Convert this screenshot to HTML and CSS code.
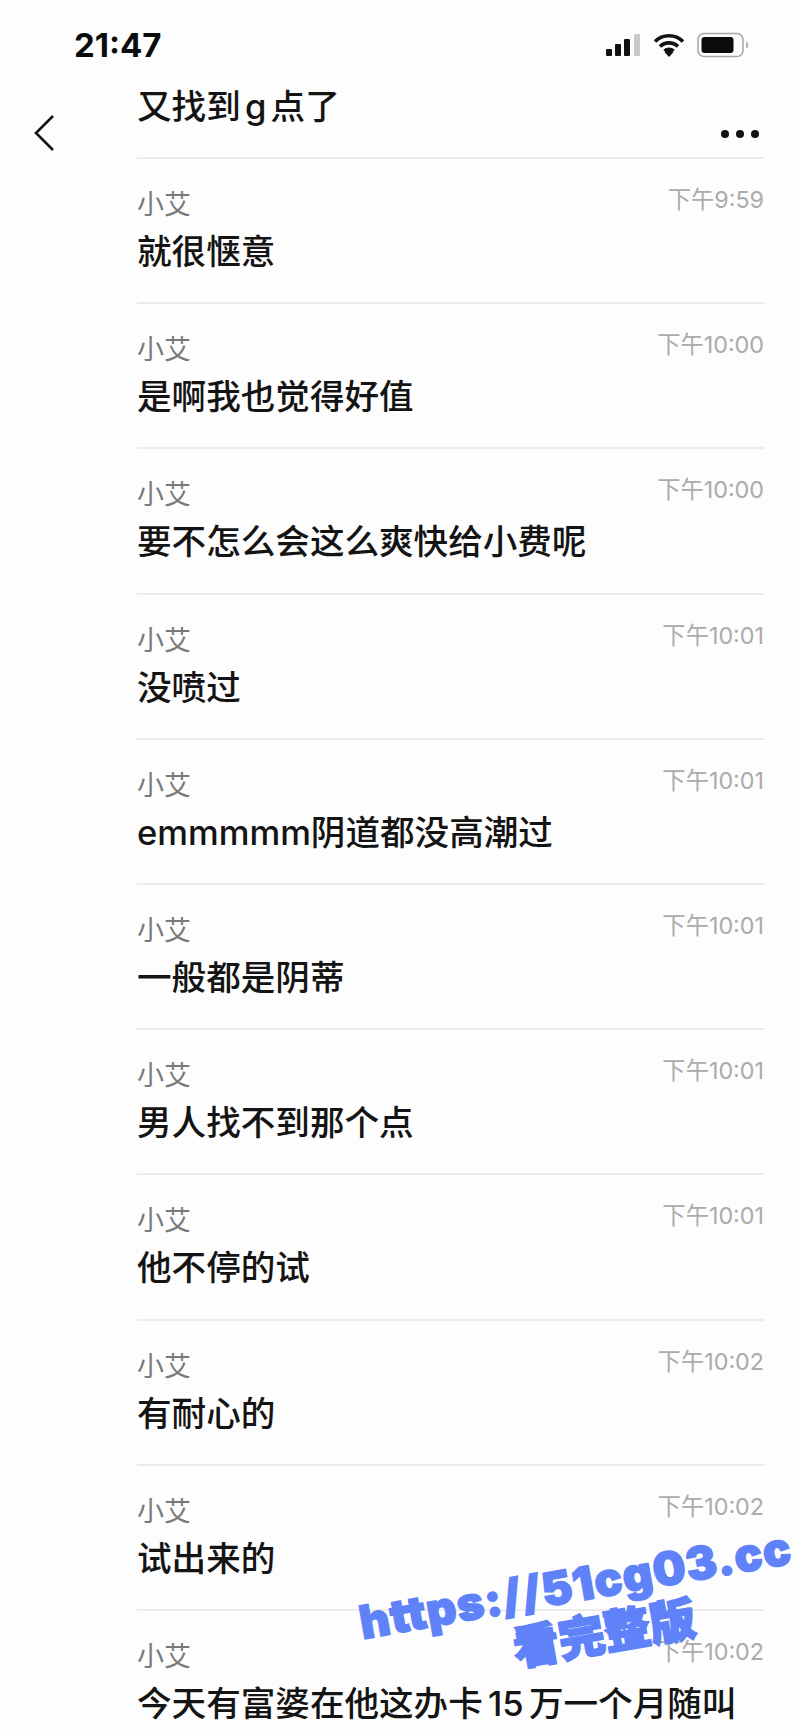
FILE: index.html
```html
<!DOCTYPE html>
<html lang="zh">
<head>
    <meta charset="UTF-8">
    <meta name="viewport" content="width=device-width, initial-scale=1.0">
    <title>又找到g点了</title>
    <link rel="stylesheet" href="styles.css">
</head>
<body>
    <div class="status-bar">
        <span class="clock">21:47</span>
        <div class="status-icons">
            <svg width="36" height="24" viewBox="0 0 36 24">
                <rect x="1" y="16" width="6" height="7" rx="1" fill="#111"/>
                <rect x="10" y="11" width="6" height="12" rx="1" fill="#111"/>
                <rect x="19" y="6" width="6" height="17" rx="1" fill="#111"/>
                <rect x="29" y="1" width="6" height="22" rx="1" fill="#c9c9c9"/>
            </svg>
            <svg width="32" height="24" viewBox="0 0 32 24">
                <path d="M2 8.5a20 20 0 0 1 28 0M7 13.5a13 13 0 0 1 18 0M11.5 18a6.500 6.500 0 0 1 9 0" fill="none" stroke="#111" stroke-width="3.600"/>
                <path d="M16 24l-4.500-5a6.500 6.500 0 0 1 9 0z" fill="#111"/>
            </svg>
            <svg width="52" height="26" viewBox="0 0 52 26">
                <rect x="1" y="1.500" width="45" height="23" rx="6" fill="none" stroke="#a8a8a8" stroke-width="1.600"/>
                <rect x="4.500" y="5" width="32" height="16" rx="3" fill="#0c0c0c"/>
                <path d="M49 9.500c1.500.5 2.500 2 2.500 3.500s-1 3-2.500 3.500z" fill="#b5b5b5"/>
            </svg>
        </div>
    </div>

    <div class="nav-bar">
        <svg class="back-icon" width="24" height="38" viewBox="0 0 24 38">
            <path d="M21 2L4 19l17 17" fill="none" stroke="#111" stroke-width="2.600"/>
        </svg>
        <h1 class="nav-title">又找到 g 点了</h1>
        <div class="more-dots"><i></i><i></i><i></i></div>
    </div>

    <div class="msg-list">
        <div class="msg-row">
            <div class="msg-head"><span class="msg-name">小艾</span><span class="msg-time">下午9:59</span></div>
            <div class="msg-text">就很惬意</div>
        </div>
        <div class="msg-row">
            <div class="msg-head"><span class="msg-name">小艾</span><span class="msg-time">下午10:00</span></div>
            <div class="msg-text">是啊我也觉得好值</div>
        </div>
        <div class="msg-row">
            <div class="msg-head"><span class="msg-name">小艾</span><span class="msg-time">下午10:00</span></div>
            <div class="msg-text">要不怎么会这么爽快给小费呢</div>
        </div>
        <div class="msg-row">
            <div class="msg-head"><span class="msg-name">小艾</span><span class="msg-time">下午10:01</span></div>
            <div class="msg-text">没喷过</div>
        </div>
        <div class="msg-row">
            <div class="msg-head"><span class="msg-name">小艾</span><span class="msg-time">下午10:01</span></div>
            <div class="msg-text">emmmmm阴道都没高潮过</div>
        </div>
        <div class="msg-row">
            <div class="msg-head"><span class="msg-name">小艾</span><span class="msg-time">下午10:01</span></div>
            <div class="msg-text">一般都是阴蒂</div>
        </div>
        <div class="msg-row">
            <div class="msg-head"><span class="msg-name">小艾</span><span class="msg-time">下午10:01</span></div>
            <div class="msg-text">男人找不到那个点</div>
        </div>
        <div class="msg-row">
            <div class="msg-head"><span class="msg-name">小艾</span><span class="msg-time">下午10:01</span></div>
            <div class="msg-text">他不停的试</div>
        </div>
        <div class="msg-row">
            <div class="msg-head"><span class="msg-name">小艾</span><span class="msg-time">下午10:02</span></div>
            <div class="msg-text">有耐心的</div>
        </div>
        <div class="msg-row">
            <div class="msg-head"><span class="msg-name">小艾</span><span class="msg-time">下午10:02</span></div>
            <div class="msg-text">试出来的</div>
        </div>
        <div class="msg-row">
            <div class="msg-head"><span class="msg-name">小艾</span><span class="msg-time">下午10:02</span></div>
            <div class="msg-text">今天有富婆在他这办卡 15 万一个月随叫</div>
        </div>
    </div>

    <div class="watermark">
        <div class="watermark-url">https://51cg03.cc</div>
        <div class="watermark-sub">看完整版</div>
    </div>
</body>
</html>
```

FILE: styles.css
```css
:root {
    --text-color: #141414;
    --name-color: #7a7a7a;
    --time-color: #ababab;
    --line-color: #ececec;
    --mark-color: #5f82f8;
}

html, body {
    margin: 0;
    height: 1733px;
    overflow: hidden;
}

body {
    position: relative;
    background: #fdfdfd;
    color: var(--text-color);
    font-family: Inter, "Noto Sans CJK SC", sans-serif;
}

.status-bar {
    display: flex;
    justify-content: space-between;
    align-items: center;
    height: 41px;
    padding: 24px 51px 0 74px;
}

.clock {
    font-size: 33px;
    font-weight: 700;
    color: #0c0c0c;
}

.status-icons {
    display: flex;
    align-items: center;
    gap: 12px;
}

.nav-bar {
    position: relative;
    height: 92px;
    margin-left: 137px;
    margin-right: 35px;
    border-bottom: 2px solid var(--line-color);
}

.nav-title {
    margin: 0;
    padding-top: 18px;
    font-size: 34.6px;
    line-height: 46px;
    font-weight: 500;
    word-spacing: -5px;
}

.back-icon {
    position: absolute;
    left: -105px;
    top: 49px;
}

.more-dots {
    position: absolute;
    right: 6px;
    top: 65px;
    display: flex;
    gap: 7px;
}

.more-dots i {
    width: 8px;
    height: 8px;
    border-radius: 50%;
    background: #111;
}

.msg-list {
    margin-left: 137px;
    margin-right: 35px;
}

.msg-row {
    box-sizing: border-box;
    height: 145.2px;
    padding-top: 27px;
    border-bottom: 2px solid var(--line-color);
}

.msg-head {
    display: flex;
    justify-content: space-between;
    align-items: flex-start;
    height: 39px;
}

.msg-name {
    font-size: 27px;
    line-height: 38px;
    color: var(--name-color);
}

.msg-time {
    font-size: 23.3px;
    line-height: 28px;
    color: var(--time-color);
    padding-right: 1px;
}

.msg-text {
    margin-top: 3px;
    font-size: 34.6px;
    line-height: 46px;
    font-weight: 500;
    word-spacing: -4px;
    white-space: nowrap;
}

/* watermark sits over the last rows */
.watermark {
    position: absolute;
    left: 360px;
    top: 1558px;
    width: 440px;
    color: var(--mark-color);
    text-align: center;
    transform: rotate(-10deg);
}

.watermark-url {
    font-size: 46px;
    line-height: 52px;
    font-weight: 900;
    letter-spacing: 1px;
    -webkit-text-stroke: 1.500px var(--mark-color);
    white-space: nowrap;
}

.watermark-sub {
    padding-left: 40px;
    font-size: 46px;
    line-height: 54px;
    font-weight: 900;
    -webkit-text-stroke: 2px var(--mark-color);
}
```
